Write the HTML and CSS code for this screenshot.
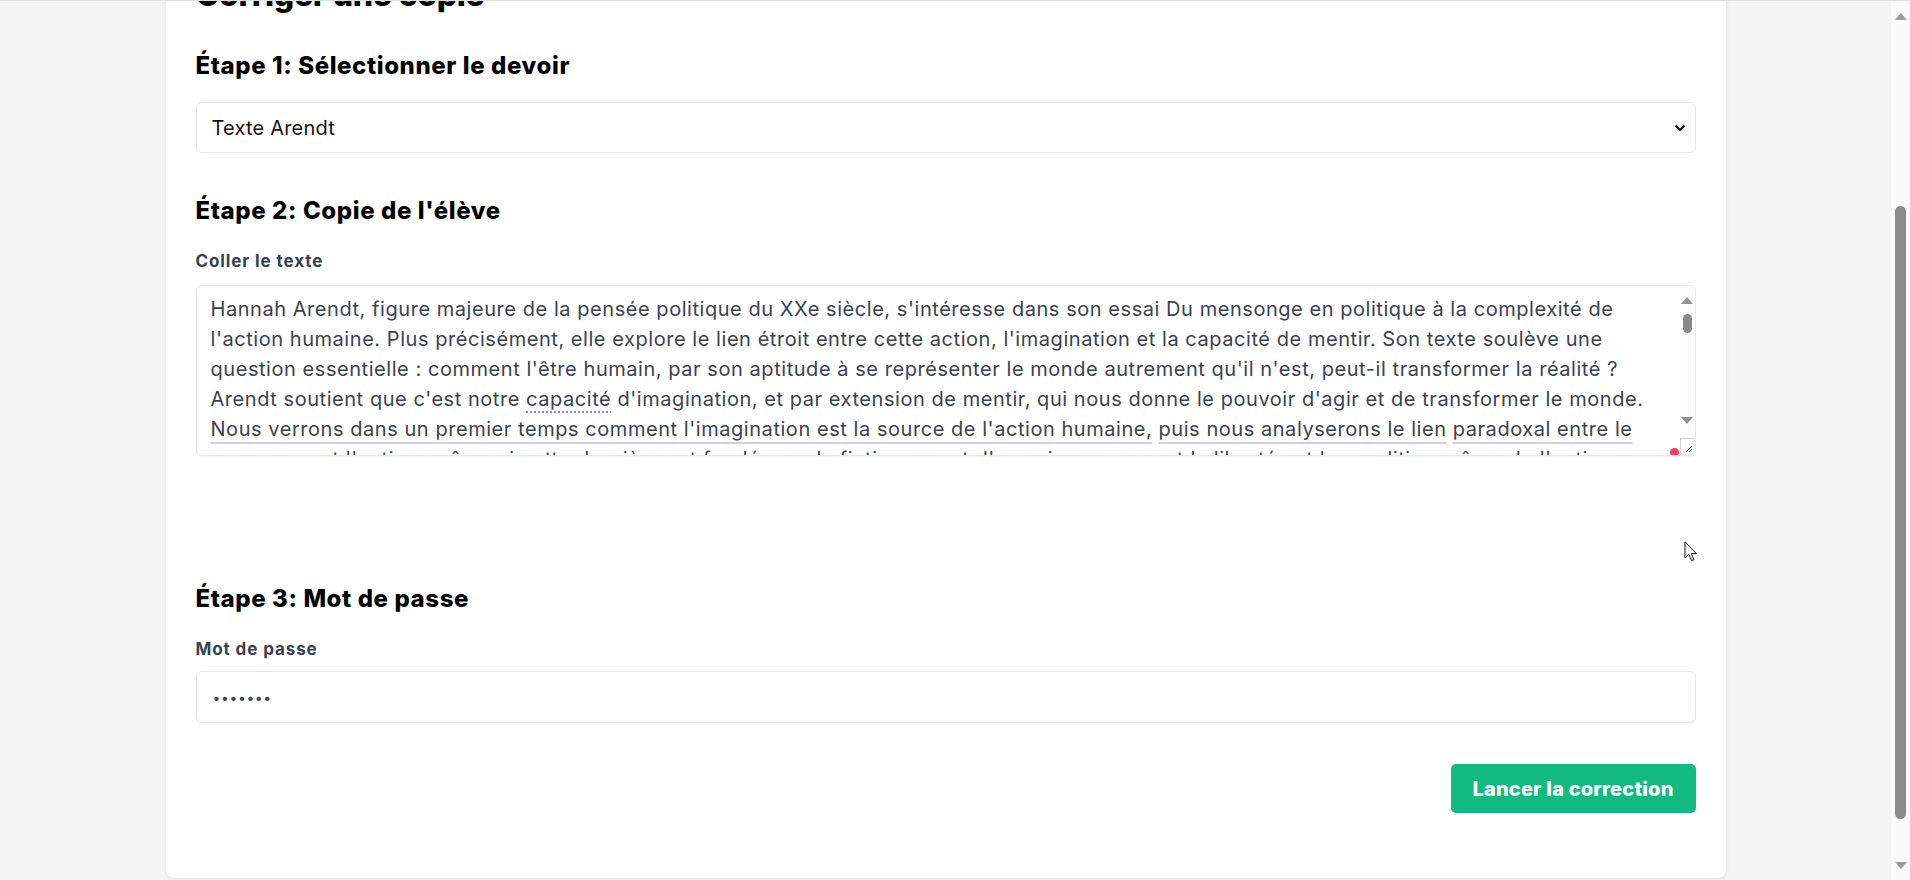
FILE: index.html
```html
<!DOCTYPE html>
<html lang="fr">
<head>
<meta charset="utf-8">
<title>Corriger une copie</title>
<link rel="stylesheet" href="styles.css">
</head>
<body>
<div class="screen">
  <main class="page">
    <div class="card">
      <h1 class="title">Corriger une copie</h1>

      <section class="step">
        <h2 class="step-title">Étape 1: Sélectionner le devoir</h2>
        <div class="select">
          <span class="select-value">Texte Arendt</span>
          <svg class="chevron" width="12" height="8" viewBox="0 0 12 8"><path d="M1.5 1.5 L6 6 L10.5 1.5" fill="none" stroke="#111" stroke-width="2.2"/></svg>
        </div>
      </section>

      <section class="step step-2">
        <h2 class="step-title">Étape 2: Copie de l'élève</h2>
        <div class="field-label">Coller le texte</div>
        <div class="textarea">
          <div class="ta-text">Hannah Arendt, figure majeure de la pensée politique du XXe siècle, s'intéresse dans son essai Du mensonge en politique à la complexité de<br>l'action humaine. Plus précisément, elle explore le lien étroit entre cette action, l'imagination et la capacité de mentir. Son texte soulève une<br>question essentielle : comment l'être humain, par son aptitude à se représenter le monde autrement qu'il n'est, peut-il transformer la réalité ?<br>Arendt soutient que c'est notre <span class="u-strong">capacité</span> d'imagination, et par extension de mentir, qui nous donne le pouvoir d'agir et de transformer le monde.<br><span class="u-soft">Nous verrons dans un premier temps comment l'imagination est la source de l'action humaine,</span> <span class="u-soft">puis nous analyserons le lien</span> <span class="u-soft">paradoxal entre le</span><br>mensonge et l'action, même si cette dernière est fondée sur la fiction, avant d'examiner comment la liberté est la condition même de l'action.</div>
          <div class="ta-scroll">
            <div class="ta-btn ta-up"><span class="tri-up"></span></div>
            <div class="ta-track"><div class="ta-thumb"></div></div>
            <div class="ta-btn ta-down"><span class="tri-down"></span></div>
            <div class="ta-gap"></div>
            <div class="ta-resize">
              <svg width="10" height="10" viewBox="0 0 10 10"><path d="M9 3 L3 9 M9 6 L6 9" stroke="#777" stroke-width="1" fill="none"/></svg>
            </div>
          </div>
          <span class="badge-dot"></span>
        </div>
      </section>

      <section class="step step-3">
        <h2 class="step-title">Étape 3: Mot de passe</h2>
        <div class="field-label">Mot de passe</div>
        <div class="input"><span class="dots">•••••••</span></div>
      </section>

      <div class="actions">
        <button class="btn" type="button">Lancer la correction</button>
      </div>
    </div>
    <svg class="cursor" width="14" height="22" viewBox="0 0 14 22"><path d="M1 1 L1 17 L4.8 13.4 L7.6 19.6 L10 18.6 L7.3 12.6 L12.4 12.6 Z" fill="#fff" stroke="#111" stroke-width="1" stroke-linejoin="round"/></svg>
  </main>
  <div class="vscroll">
    <div class="vs-btn vs-up"><span class="vtri-up"></span></div>
    <div class="vs-track"><div class="vs-thumb"></div></div>
    <div class="vs-btn vs-down"><span class="vtri-down"></span></div>
  </div>
</div>
</body>
</html>
```
FILE: styles.css
```css
html, body {
  margin: 0;
  padding: 0;
  height: 880px;
  overflow: hidden;
}

body {
  font-family: "Inter", "Noto Sans", sans-serif;
  color: #111;
}

.screen {
  display: flex;
  height: 880px;
  box-sizing: border-box;
  border-top: 1px solid #dedede;
}

.page {
  flex: 1;
  position: relative;
  background: #f4f4f4;
  overflow: hidden;
}

.card {
  width: 1560px;
  box-sizing: border-box;
  margin: -56px auto 0;
  padding: 30px 30px 65px;
  background: #fff;
  border-radius: 8px;
  box-shadow: 0 1px 4px rgba(0, 0, 0, 0.08);
}

.title {
  margin: 0 0 39px;
  font-size: 32px;
  line-height: 36px;
  font-weight: 800;
  color: #000;
  letter-spacing: -0.3px;
  position: relative;
  top: 2px;
}

.step-title {
  margin: 0;
  font-size: 24px;
  line-height: 32px;
  font-weight: 800;
  color: #000;
  letter-spacing: 0.6px;
}

.step-2 { margin-top: 42px; }
.step-3 { margin-top: 127px; }

.select {
  margin-top: 20px;
  height: 51px;
  box-sizing: border-box;
  border: 1px solid #e5e7eb;
  border-radius: 6px;
  display: flex;
  align-items: center;
  justify-content: space-between;
  padding: 0 9px 0 15px;
  background: #fff;
}

.select-value {
  font-size: 20px;
  color: #111;
  letter-spacing: 0.2px;
}

.field-label {
  margin-top: 24px;
  font-size: 17px;
  line-height: 20px;
  font-weight: 700;
  color: #374151;
  letter-spacing: 0.9px;
}

.textarea {
  position: relative;
  margin-top: 14px;
  height: 171px;
  box-sizing: border-box;
  border: 1px solid #e5e7eb;
  border-radius: 6px;
  box-shadow: 0 1px 2px rgba(0, 0, 0, 0.06);
  display: flex;
  overflow: hidden;
  background: #fff;
}

.ta-text {
  flex: 1;
  padding: 8px 0 0 14px;
  font-size: 20px;
  line-height: 30px;
  color: #3b4250;
  letter-spacing: 0.55px;
  white-space: nowrap;
  overflow: hidden;
}

.u-soft {
  text-decoration: underline 2px #d3cbf7;
  text-underline-offset: 6px;
  text-decoration-skip-ink: none;
}

.u-strong {
  text-decoration: underline dotted 2px #8a7fe4;
  text-underline-offset: 5px;
  text-decoration-skip-ink: none;
}

.ta-scroll {
  width: 15px;
  display: flex;
  flex-direction: column;
  background: #fdfdfd;
}

.ta-btn {
  display: flex;
  justify-content: center;
  align-items: center;
}

.ta-up { height: 28px; }
.ta-down { height: 20px; }
.ta-gap { height: 8px; }

.tri-up, .tri-down {
  width: 0;
  height: 0;
  border-left: 6px solid transparent;
  border-right: 6px solid transparent;
}

.tri-up { border-bottom: 7px solid #8f8f8f; }
.tri-down { border-top: 7px solid #8f8f8f; }

.ta-track {
  flex: 1;
  display: flex;
  justify-content: center;
}

.ta-thumb {
  width: 9px;
  height: 19px;
  border-radius: 5px;
  background: #8a8a8a;
}

.ta-resize {
  height: 17px;
  box-sizing: border-box;
  border-top: 1px solid #d4d4d4;
  border-left: 1px solid #d4d4d4;
  display: flex;
  justify-content: flex-end;
  align-items: flex-end;
  padding: 0 2px 2px 0;
}

.badge-dot {
  position: absolute;
  right: 16px;
  bottom: -2px;
  width: 9px;
  height: 9px;
  border-radius: 50%;
  background: #f43f5e;
}

.input {
  margin-top: 12px;
  height: 52px;
  box-sizing: border-box;
  border: 1px solid #e5e7eb;
  border-radius: 6px;
  box-shadow: 0 1px 2px rgba(0, 0, 0, 0.06);
  display: flex;
  align-items: center;
  padding: 0 16px;
  background: #fff;
}

.dots {
  font-size: 14px;
  letter-spacing: 0.6px;
  color: #3f4756;
}

.actions {
  margin-top: 41px;
  display: flex;
  justify-content: flex-end;
}

.btn {
  height: 49px;
  width: 245px;
  border: none;
  border-radius: 5px;
  background: #12b981;
  color: #fff;
  font-family: "Inter", "Noto Sans", sans-serif;
  font-size: 20px;
  font-weight: 800;
  letter-spacing: 0.2px;
  padding: 0;
}

.cursor {
  position: absolute;
  left: 1684px;
  top: 540px;
}

.vscroll {
  width: 19px;
  background: #fafafa;
  display: flex;
  flex-direction: column;
}

.vs-btn {
  display: flex;
  justify-content: center;
  align-items: center;
  height: 30px;
}

.vtri-up, .vtri-down {
  width: 0;
  height: 0;
  border-left: 6px solid transparent;
  border-right: 6px solid transparent;
}

.vtri-up { border-bottom: 7px solid #9a9a9a; }
.vtri-down { border-top: 7px solid #9a9a9a; }

.vs-track {
  flex: 1;
  display: flex;
  justify-content: center;
  padding-top: 175px;
}

.vs-thumb {
  width: 11px;
  height: 613px;
  border-radius: 6px;
  background: #8c8c8c;
}
```
